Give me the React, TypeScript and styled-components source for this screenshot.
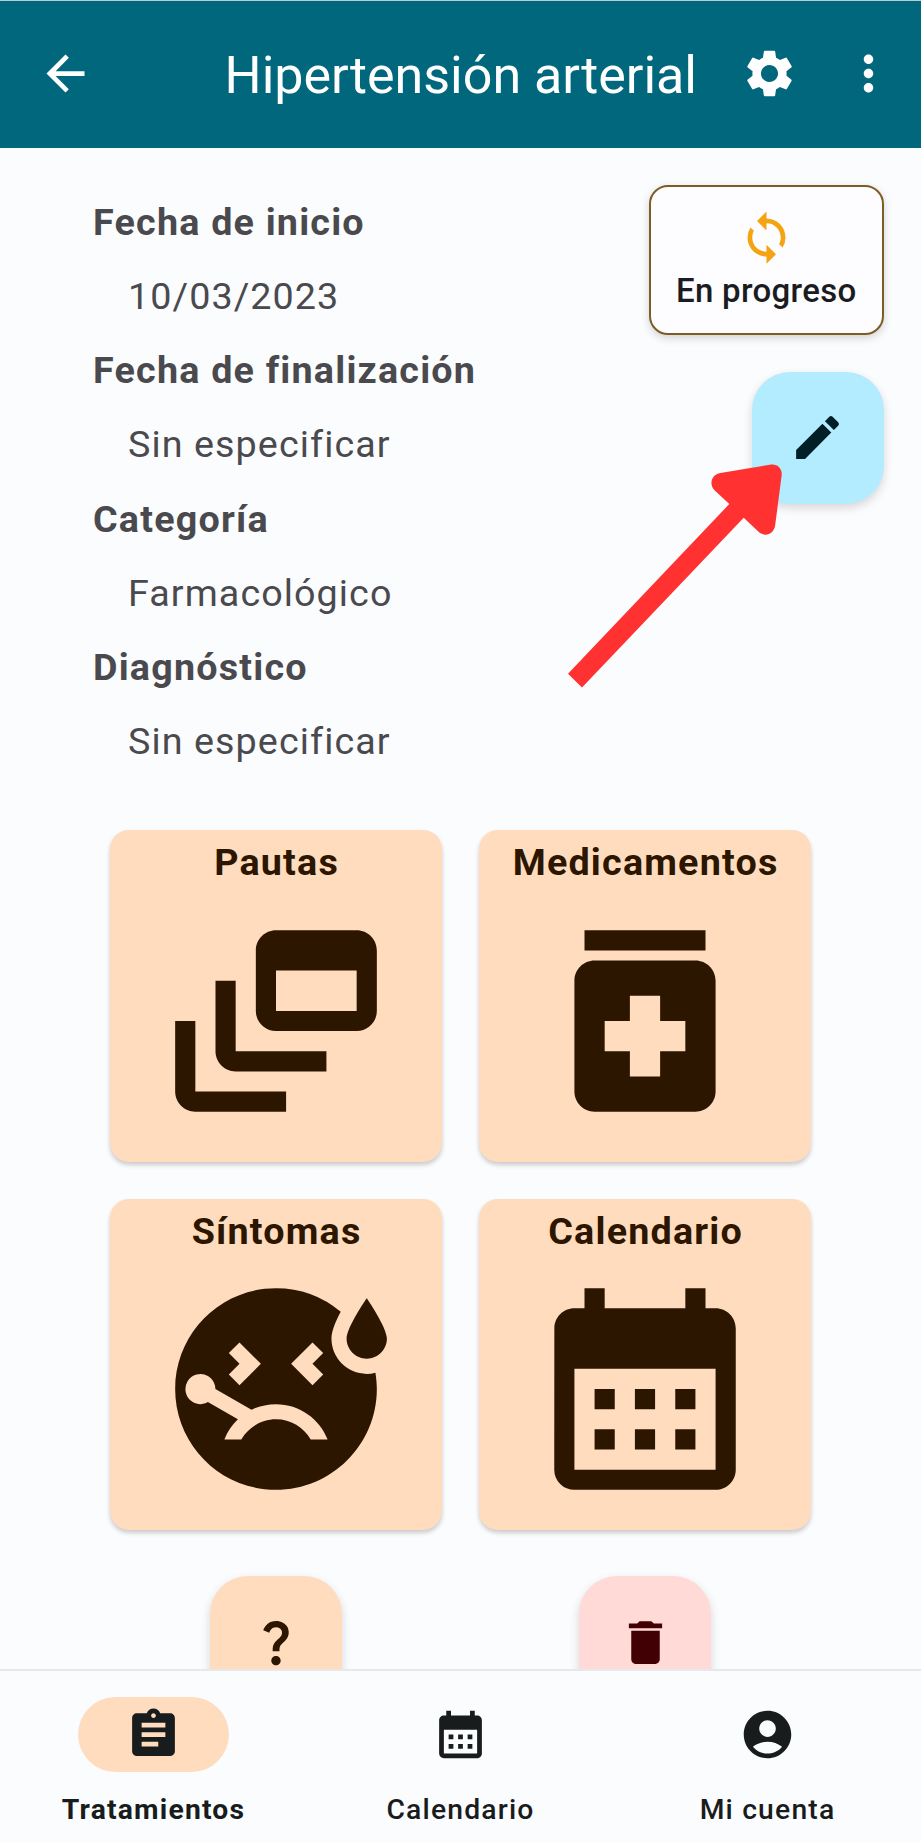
import React from "react";
import styled, { createGlobalStyle } from "styled-components";
import {
  MdArrowBack,
  MdAssignment,
  MdCalendarMonth,
  MdDelete,
  MdDynamicFeed,
  MdEdit,
  MdMedication,
  MdMoreVert,
  MdQuestionMark,
  MdSettings,
  MdSick,
  MdSync,
} from "react-icons/md";

const GlobalStyle = createGlobalStyle`
  * { box-sizing: border-box; }
  body {
    margin: 0;
    background: #fbfcfe;
    font-family: Roboto, sans-serif;
  }
  button {
    font: inherit;
    border: 0;
    padding: 0;
  }
  svg { display: block; flex: none; }
`;

const Screen = styled.div`
  position: relative;
  width: 921px;
  height: 1843px;
  display: flex;
  flex-direction: column;
  overflow: hidden;
  background: #fbfcfe;
`;

const TopBar = styled.header`
  flex: none;
  height: 148px;
  display: flex;
  align-items: center;
  padding: 0 24px 2px 37px;
  border-top: 1px solid #b5cdd3;
  background: #00677d;
  color: #fff;
`;

const Title = styled.h1`
  flex: 1;
  margin: 5px 44px 0 0;
  text-align: right;
  font-size: 52px;
  font-weight: 400;
  line-height: 60px;
`;

const IconButton = styled.button`
  margin-right: 42px;
  background: none;
  color: inherit;

  &:last-child { margin-right: 0; }
`;

const Content = styled.main`
  flex: 1;
  min-height: 0;
  overflow: hidden;
`;

const Summary = styled.section`
  display: flex;
  justify-content: space-between;
  height: 682px;
  padding: 36.8px 37.5px 0 93px;
`;

const Details = styled.dl`
  margin: 0;
  color: #4a4a4e;
  font-size: 37.7px;
  line-height: 74.2px;
  letter-spacing: 1.2px;
`;

const Term = styled.dt`
  font-weight: 700;
`;

const Value = styled.dd`
  margin: 0 0 0 35px;
  letter-spacing: 1.08px;
`;

const Actions = styled.div`
  display: flex;
  flex-direction: column;
  align-items: flex-end;
  gap: 37px;
  padding-top: 0.7px;
`;

const StatusCard = styled.div`
  width: 234.5px;
  height: 149.5px;
  display: flex;
  flex-direction: column;
  align-items: center;
  padding-top: 21.5px;
  border: 2.5px solid #7e5d24;
  border-radius: 19px;
  background: #fdfdff;
  color: #1b1b22;
  font-size: 33px;
  font-weight: 500;
  line-height: 49px;
  letter-spacing: 0.3px;
  box-shadow: 0 3px 9px rgba(30, 20, 20, 0.18);

  svg { color: #f4a412; }
`;

const Fab = styled.button<{ $bg: string; $fg: string }>`
  width: 132px;
  height: 132px;
  display: flex;
  align-items: center;
  justify-content: center;
  border-radius: 38px;
  background: ${(p) => p.$bg};
  color: ${(p) => p.$fg};
  box-shadow: 0 4px 10px rgba(30, 20, 20, 0.16);
`;

const TileGrid = styled.section`
  display: grid;
  grid-template-columns: 332px 332px;
  gap: 37px;
  justify-content: center;
`;

const Tile = styled.button`
  height: 331.6px;
  display: flex;
  flex-direction: column;
  align-items: center;
  padding-top: 4px;
  border-radius: 19px;
  background: #ffdcbe;
  color: #2c1600;
  box-shadow: 0 3px 4px rgba(40, 30, 30, 0.22);
`;

const TileTitle = styled.span`
  margin-bottom: 8.5px;
  padding-left: 1.2px;
  font-size: 37.7px;
  font-weight: 700;
  line-height: 57px;
  letter-spacing: 1.2px;
`;

const FabRow = styled.div`
  display: grid;
  grid-template-columns: 332px 332px;
  gap: 37px;
  justify-content: center;
  justify-items: center;
  padding-top: 46px;
`;

const BottomNav = styled.nav`
  flex: none;
  height: 174.5px;
  display: grid;
  grid-template-columns: repeat(3, 1fr);
  padding-top: 26.5px;
  border-top: 2px solid #e6e8eb;
  background: #fbfcfe;
  color: #191c1d;
`;

const NavItem = styled.a<{ $active?: boolean }>`
  display: flex;
  flex-direction: column;
  align-items: center;
  gap: 19px;
  font-size: 28.3px;
  font-weight: ${(p) => (p.$active ? 700 : 500)};
  line-height: 38px;
  letter-spacing: 1.18px;
`;

const Pill = styled.span<{ $active?: boolean }>`
  width: 150.5px;
  height: 75px;
  display: flex;
  align-items: center;
  justify-content: center;
  border-radius: 38px;
  background: ${(p) => (p.$active ? "#ffdcbe" : "transparent")};
`;

const Pointer = styled.svg`
  position: absolute;
  left: 560px;
  top: 455px;
  pointer-events: none;
`;

const AccountIcon = ({ size }: { size: number }) => (
  <svg width={size} height={size} viewBox="0 0 24 24" fill="currentColor">
    <path d="M12 2C6.48 2 2 6.48 2 12s4.48 10 10 10 10-4.48 10-10S17.52 2 12 2zm0 4c1.93 0 3.5 1.57 3.5 3.5S13.93 13 12 13s-3.5-1.57-3.5-3.5S10.07 6 12 6zm0 14c-2.03 0-4.43-.82-6.14-2.88C7.55 15.8 9.68 15 12 15s4.45.8 6.14 2.12C16.43 19.18 14.03 20 12 20z" />
  </svg>
);

const details = [
  { term: "Fecha de inicio", value: "10/03/2023" },
  { term: "Fecha de finalización", value: "Sin especificar" },
  { term: "Categoría", value: "Farmacológico" },
  { term: "Diagnóstico", value: "Sin especificar" },
];

const tiles = [
  { title: "Pautas", Icon: MdDynamicFeed },
  { title: "Medicamentos", Icon: MdMedication },
  { title: "Síntomas", Icon: MdSick },
  { title: "Calendario", Icon: MdCalendarMonth },
];

const navItems = [
  { label: "Tratamientos", Icon: MdAssignment, active: true },
  { label: "Calendario", Icon: MdCalendarMonth, active: false },
  { label: "Mi cuenta", Icon: AccountIcon, active: false },
];

export default function App() {
  return (
    <>
      <GlobalStyle />
      <Screen>
        <TopBar>
          <IconButton aria-label="Volver">
            <MdArrowBack size={57} />
          </IconButton>
          <Title>Hipertensión arterial</Title>
          <IconButton aria-label="Ajustes">
            <MdSettings size={57} />
          </IconButton>
          <IconButton aria-label="Más opciones">
            <MdMoreVert size={57} />
          </IconButton>
        </TopBar>

        <Content>
          <Summary>
            <Details>
              {details.map((d) => (
                <React.Fragment key={d.term}>
                  <Term>{d.term}</Term>
                  <Value>{d.value}</Value>
                </React.Fragment>
              ))}
            </Details>
            <Actions>
              <StatusCard>
                <MdSync size={57} />
                En progreso
              </StatusCard>
              <Fab $bg="#b3ebff" $fg="#001f27" aria-label="Editar">
                <MdEdit size={57} />
              </Fab>
            </Actions>
          </Summary>

          <TileGrid>
            {tiles.map(({ title, Icon }) => (
              <Tile key={title}>
                <TileTitle>{title}</TileTitle>
                <Icon size={242} />
              </Tile>
            ))}
          </TileGrid>

          <FabRow>
            <Fab $bg="#ffdcbe" $fg="#2c1600" aria-label="Ayuda">
              <MdQuestionMark size={56} />
            </Fab>
            <Fab $bg="#ffdad7" $fg="#410004" aria-label="Eliminar">
              <MdDelete size={57} />
            </Fab>
          </FabRow>
        </Content>

        <BottomNav>
          {navItems.map(({ label, Icon, active }) => (
            <NavItem key={label} $active={active}>
              <Pill $active={active}>
                <Icon size={57} />
              </Pill>
              {label}
            </NavItem>
          ))}
        </BottomNav>

        <Pointer width="240" height="250" viewBox="560 455 240 250" fill="#ff3131">
          <path d="M568 673.8L729.3 504L714.8 490.5C708.5 484.5 711.5 474.3 720.5 473L771 464.5C777.5 463.6 782.3 468.6 781.7 475L775.2 525C774 534.3 764.8 537.8 758.3 531.6L743.7 517.8L582 687.6Z" />
        </Pointer>
      </Screen>
    </>
  );
}
